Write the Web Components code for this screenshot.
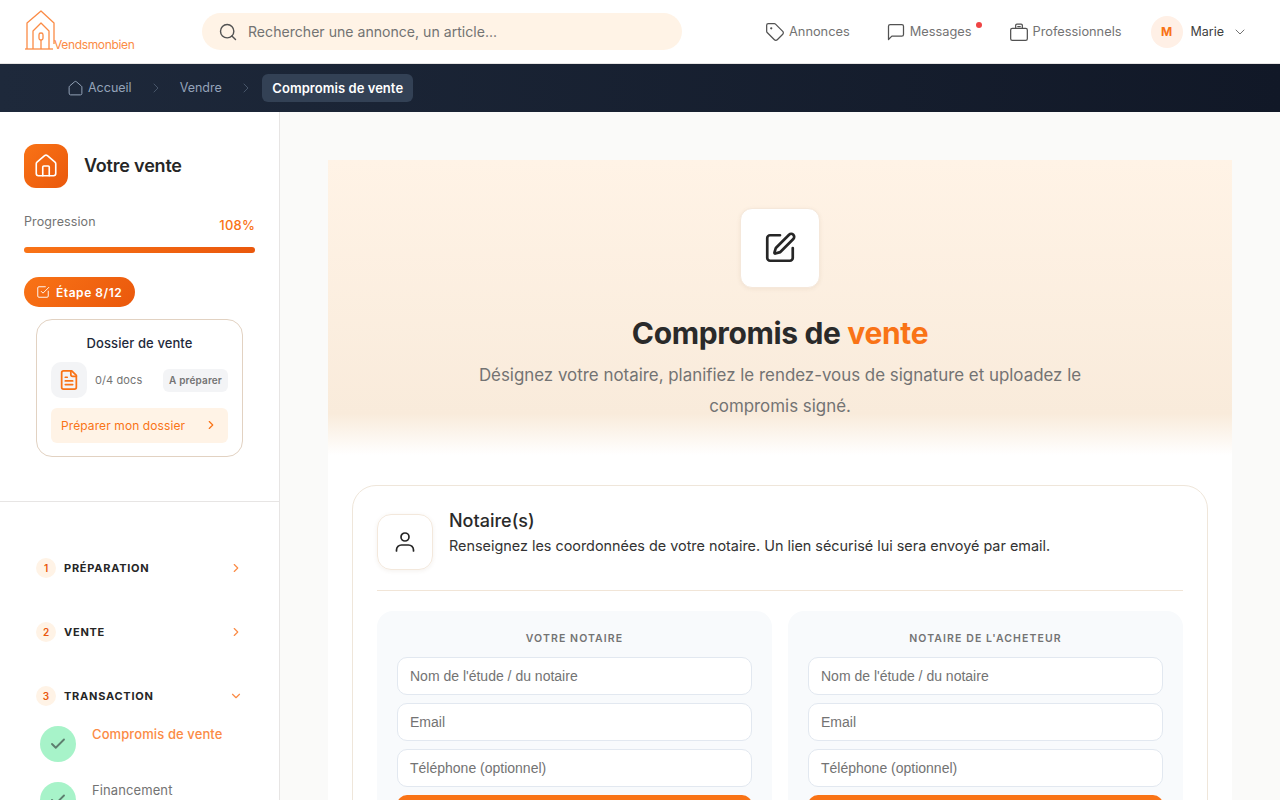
<!DOCTYPE html>
<html lang="fr">
<head>
<meta charset="utf-8">
<title>Compromis de vente</title>
<style>
html,body{margin:0;padding:0;height:800px;overflow:hidden;background:#fff}
body{font-family:Inter,"Liberation Sans",sans-serif;color:#262626}
vm-app{display:block}
</style>
</head>
<body>
<vm-app></vm-app>
<script>
const ico=(p,s=20,sw=1.5,c='currentColor',extra='')=>`<svg width="${s}" height="${s}" viewBox="0 0 24 24" fill="none" stroke="${c}" stroke-width="${sw}" stroke-linecap="round" stroke-linejoin="round" style="display:block;flex:none;${extra}">${p}</svg>`;
const P={
 search:'<circle cx="11" cy="11" r="8"/><path d="m21 21-4.3-4.3"/>',
 tag:'<path d="M12.6 2.6A2 2 0 0 0 11.2 2H4a2 2 0 0 0-2 2v7.2a2 2 0 0 0 .6 1.4l8.700 8.700a2.400 2.400 0 0 0 3.400 0l6.600-6.600a2.400 2.400 0 0 0 0-3.400z"/><circle cx="7.500" cy="7.500" r=".6" fill="currentColor"/>',
 msg:'<path d="M21 15a2 2 0 0 1-2 2H7l-4 4V5a2 2 0 0 1 2-2h14a2 2 0 0 1 2 2z"/>',
 case:'<rect x="2" y="7.500" width="20" height="14.500" rx="2"/><path d="M8 7.500V4a1.500 1.500 0 0 1 1.500-1.500h5A1.500 1.500 0 0 1 16 4v3.500"/><path d="M10.500 5.500h3"/>',
 home:'<path d="M3 10a2 2 0 0 1 .7-1.500l7-6a2 2 0 0 1 2.600 0l7 6A2 2 0 0 1 21 10v9a2 2 0 0 1-2 2H5a2 2 0 0 1-2-2z"/>',
 home2:'<path d="M15 21v-8a1 1 0 0 0-1-1h-4a1 1 0 0 0-1 1v8"/><path d="M3 10a2 2 0 0 1 .7-1.500l7-6a2 2 0 0 1 2.600 0l7 6A2 2 0 0 1 21 10v9a2 2 0 0 1-2 2H5a2 2 0 0 1-2-2z"/>',
 right:'<path d="m9 18 6-6-6-6"/>',
 down:'<path d="m6 9 6 6 6-6"/>',
 checkbox:'<path d="M21 10.500V19a2 2 0 0 1-2 2H5a2 2 0 0 1-2-2V5a2 2 0 0 1 2-2h11"/><path d="m9 11 3 3L22 4"/>',
 file:'<path d="M15 2H6a2 2 0 0 0-2 2v16a2 2 0 0 0 2 2h12a2 2 0 0 0 2-2V7z"/><path d="M14 2v4a2 2 0 0 0 2 2h4"/><path d="M10 9H8"/><path d="M16 13H8"/><path d="M16 17H8"/>',
 edit:'<path d="M12 3H5a2 2 0 0 0-2 2v14a2 2 0 0 0 2 2h14a2 2 0 0 0 2-2v-7"/><path d="M18.400 2.600a2.100 2.100 0 1 1 3 3L12.400 14.600a2 2 0 0 1-.85.5l-2.870.84a.5.5 0 0 1-.62-.62l.84-2.870a2 2 0 0 1 .5-.85z"/>',
 user:'<path d="M3.500 21v-1a5 5 0 0 1 5-5h7a5 5 0 0 1 5 5v1"/><circle cx="12" cy="7" r="4"/>',
 check:'<path d="M20 6 9 17l-5-5"/>'
};
function def(name,html){
 customElements.define(name,class extends HTMLElement{
  constructor(){super();this.attachShadow({mode:'open'}).innerHTML=typeof html==='function'?html(this):html;}
 });
}

def('vm-header',`<style>
:host{display:flex;align-items:center;height:63px;border-bottom:1px solid #e7e5e4;background:#fff;box-sizing:content-box}
.logo{width:110px;margin-left:25px;height:50px;position:relative;flex:none}
.logo svg{position:absolute;left:0;top:3px}
.logo span{position:absolute;left:29px;top:30px;color:#fb8b45;font-size:12px;letter-spacing:-.35px;line-height:15px;white-space:nowrap}
.search{margin-left:67px;width:480px;height:37px;border-radius:19px;background:#fff3e6;display:flex;align-items:center;color:#737373;font-size:14.100px;flex:none}
.search svg{margin-left:16px;margin-right:10px;color:#525252}
nav{display:flex;align-items:center;margin-left:83px}
.a{display:flex;align-items:center;gap:4px;font-size:12.800px;color:#737373;position:relative}
.a svg{color:#525252}
.a span{margin-bottom:1px}
.dot{position:absolute;width:6px;height:6px;border-radius:50%;background:#ef4444;right:-10px;top:0}
.u{display:flex;align-items:center;margin-left:29px}
.av{width:32px;height:32px;border-radius:50%;background:#fff0e6;color:#f97316;font-weight:700;font-size:12px;display:flex;align-items:center;justify-content:center}
.n{font-size:12.500px;color:#404040;margin-left:8px;margin-right:8px}
</style>
<div class="logo">
<svg width="38" height="40" viewBox="0 0 38 40" fill="none" stroke="#fb8b45" stroke-width="1.300" stroke-linejoin="round"><path d="M0 39h28"/><path d="M2 39V13L16 1l13 12v21"/><path d="M8 39V21l8-8 8 8v18"/><rect x="14" y="23" width="4" height="7" rx="1.800"/><path d="M16 30v9"/></svg>
<span>Vendsmonbien</span></div>
<div class="search">${ico(P.search,20,1.7)}<span>Rechercher une annonce, un article...</span></div>
<nav>
<div class="a">${ico(P.tag,20,1.5)}<span>Annonces</span></div>
<div class="a" style="margin-left:36px">${ico(P.msg,20,1.5)}<span>Messages</span><i class="dot"></i></div>
<div class="a" style="margin-left:37px">${ico(P.case,20,1.5)}<span>Professionnels</span></div>
<div class="u"><div class="av">M</div><div class="n">Marie</div>${ico(P.down,16,1.5,'#737373')}</div>
</nav>`);

def('vm-breadcrumb',`<style>
:host{display:flex;align-items:center;height:48px;padding-left:67px;background:linear-gradient(90deg,#1e293b,#111827);font-size:12.500px;color:#94a3b8}
.h{display:flex;align-items:center;gap:4px}
span{margin-bottom:1px}
.s{margin:0 16px;color:#475569}
.cur{background:#334155;color:#fff;font-weight:600;font-size:13px;letter-spacing:.05px;height:28px;padding:0 10px 1px;box-sizing:border-box;border-radius:6px;display:flex;align-items:center}
</style>
<div class="h">${ico(P.home,17,1.4)}<span>Accueil</span></div>
<div class="s">${ico(P.right,16,1.5)}</div><span>Vendre</span>
<div class="s" style="margin-right:8.600px">${ico(P.right,16,1.5)}</div><div class="cur">Compromis de vente</div>`);

def('vm-dossier',`<style>
:host{display:block;margin:12px 0 0 12px;width:207px;height:138px;box-sizing:border-box;border:1px solid #e2d2c2;border-radius:16px;padding:13px 14px;background:#fff}
h3{margin:0;font-size:13px;line-height:20px;font-weight:500;color:#1e293b;text-align:center;letter-spacing:.1px}
.r{display:flex;align-items:center;margin-top:9px}
.i{width:36px;height:36px;border-radius:10px;background:#f3f4f6;display:flex;align-items:center;justify-content:center;color:#f97316}
.c{font-size:11px;color:#737373;margin-left:8px;flex:1;letter-spacing:.1px}
.b{font-size:10px;font-weight:600;background:#f3f4f6;color:#737373;border-radius:6px;padding:0 6px;height:23px;display:flex;align-items:center;letter-spacing:.15px}
.go{margin-top:10px;height:34px;border-radius:6px;background:#fff3e6;color:#f97316;display:flex;align-items:center;justify-content:space-between;padding:0 10px 1px;font-size:12px;letter-spacing:.1px}
</style><h3>Dossier de vente</h3>
<div class="r"><div class="i">${ico(P.file,22,1.9)}</div><span class="c">0/4 docs</span><span class="b">A préparer</span></div>
<div class="go"><span>Préparer mon dossier</span>${ico(P.right,14,2)}</div>`);

def('vm-section',h=>`<style>
:host{display:flex;align-items:center;height:20px;font-size:11px;font-weight:700;color:#262626;letter-spacing:.75px}
.n{width:20px;height:20px;border-radius:50%;background:#fff3e6;color:#ea580c;font-size:10px;font-weight:600;display:flex;align-items:center;justify-content:center;margin-right:8px;letter-spacing:0}
.t{flex:1}
svg{color:#fb8b45}
</style><div class="n">${h.getAttribute('n')}</div><div class="t"><slot></slot></div>${ico(h.hasAttribute('open')?P.down:P.right,14,2)}`);

def('vm-substep',h=>`<style>
:host{display:flex;align-items:flex-start;height:56px;margin-left:4px;font-size:13px;color:#737373;letter-spacing:.1px}
:host([active]){color:#fb8b45;font-weight:500}
.c{width:36px;height:36px;border-radius:50%;background:#a7f3c9;display:flex;align-items:center;justify-content:center;margin-right:16px;color:#5d7f6f;flex:none}
.l{margin-top:-1px;line-height:18px}
</style><div class="c">${ico(P.check,18,2.500)}</div><div class="l"><slot></slot></div>`);

def('vm-sidebar',`<style>
:host{display:block;width:280px;box-sizing:border-box;border-right:1px solid #e7e5e4;background:#fff;flex:none;height:688px;overflow:hidden}
.top{padding:32px 24px 44px;border-bottom:1px solid #e7e5e4;height:390px;box-sizing:border-box}
.ttl{display:flex;align-items:center;gap:16px}
.bx{width:44px;height:44px;border-radius:12px;background:linear-gradient(135deg,#f97316,#ea580c);display:flex;align-items:center;justify-content:center;color:#fff}
h2{margin:0;font-size:18px;font-weight:600;color:#262626;letter-spacing:-.2px;position:relative;top:-1px}
.p{display:flex;justify-content:space-between;align-items:flex-end;margin-top:25px;font-size:12.500px;color:#737373;height:25px}
.p span{position:relative;top:-9px;letter-spacing:.1px}
.p b{font-weight:500;color:#f97316;font-size:13px;position:relative;top:-5px;letter-spacing:.2px}
.bar{margin-top:9px;height:6px;border-radius:3px;background:linear-gradient(90deg,#f97316,#ea580c)}
.pill{display:inline-flex;align-items:center;gap:6px;margin-top:24px;height:30px;padding:0 13px 0 12px;border-radius:15px;background:linear-gradient(135deg,#f97316,#ea580c);color:#fff;font-size:12px;font-weight:600;letter-spacing:.55px;vertical-align:top}
.nav{padding:56px 36px 0 36px;display:flex;flex-direction:column}
vm-section{margin-bottom:44px}
vm-section[open]{margin-bottom:20px}
</style>
<div class="top">
<div class="ttl"><div class="bx">${ico(P.home2,26,1.5)}</div><h2>Votre vente</h2></div>
<div class="p"><span>Progression</span><b>108%</b></div>
<div class="bar"></div>
<div class="pill">${ico(P.checkbox,14,1.6)}Étape 8/12</div>
<vm-dossier></vm-dossier>
</div>
<div class="nav">
<vm-section n="1">PRÉPARATION</vm-section>
<vm-section n="2">VENTE</vm-section>
<vm-section n="3" open>TRANSACTION</vm-section>
<vm-substep active>Compromis de vente</vm-substep>
<vm-substep>Financement</vm-substep>
</div>`);

def('vm-hero',`<style>
:host{display:block;height:295px;box-sizing:border-box;padding-top:48px;text-align:center;background:linear-gradient(180deg,#fff3e6 0,#f9ebdb 86%,#fff 100%)}
.ic{width:78px;height:78px;margin:0 auto;background:#fff;border:1px solid #f5e8db;border-radius:12px;display:flex;align-items:center;justify-content:center;box-shadow:0 1px 4px rgba(120,80,40,.08);color:#262626}
h1{margin:25px 0 0;font-size:30px;line-height:40px;font-weight:700;letter-spacing:-.35px;color:#2a2a2a}
h1 em{font-style:normal;color:#f97316}
p{margin:7px auto 0;width:640px;font-size:16.900px;line-height:31px;color:#737373}
</style>
<div class="ic">${ico(P.edit,34,1.900)}</div>
<h1>Compromis de <em>vente</em></h1>
<p>Désignez votre notaire, planifiez le rendez-vous de signature et uploadez le compromis signé.</p>`);

def('vm-field',`<style>
:host{display:flex;align-items:center;height:38px;box-sizing:border-box;border:1px solid #e2e8f0;border-radius:10px;background:#fff;padding:0 12px;font:14px "Liberation Sans",Arial,sans-serif;color:#737373}
</style><slot></slot>`);

def('vm-panel',`<style>
:host{display:block;flex:1;min-width:0;background:#f8fafc;border-radius:16px;padding:20px;box-sizing:border-box;height:260px}
h4{margin:0 0 11px;padding-top:1px;font-size:10.500px;line-height:14px;font-weight:600;letter-spacing:1.100px;color:#737373;text-align:center}
.f{display:flex;flex-direction:column;gap:8px}
.btn{height:38px;border-radius:10px;background:#f97316}
</style><h4><slot name="t"></slot></h4><div class="f"><slot></slot><div class="btn"></div></div>`);

def('vm-card',`<style>
:host{display:block;margin:30px 24px 0;background:#fff;border:1px solid #efe6da;border-radius:24px;padding:28px 24px 0;height:400px;box-sizing:border-box}
.h{display:flex;gap:16px;padding-bottom:20px;border-bottom:1px solid #f1e5d7;height:77px;box-sizing:border-box}
.ic{width:56px;height:56px;box-sizing:border-box;border:1px solid #f3e8dc;border-radius:14px;display:flex;align-items:center;justify-content:center;box-shadow:0 1px 4px rgba(120,80,40,.08);color:#262626;flex:none}
h3{margin:-5px 0 0;font-size:18px;line-height:24px;font-weight:500;color:#2a2a2a}
p{margin:3px 0 0;font-size:14.400px;line-height:20px;color:#333}
.g{display:flex;gap:16px;margin-top:20px}
</style>
<div class="h"><div class="ic">${ico(P.user,24,1.700)}</div><div><h3>Notaire(s)</h3><p>Renseignez les coordonnées de votre notaire. Un lien sécurisé lui sera envoyé par email.</p></div></div>
<div class="g"><slot></slot></div>`);

def('vm-app',`<style>
:host{display:block;height:800px;overflow:hidden}
.b{display:flex;height:688px}
main{flex:1;background:#fafaf9;padding:48px 48px 0;min-width:0;overflow:hidden}
.w{background:#fff;height:640px;overflow:hidden}
</style>
<vm-header></vm-header><vm-breadcrumb></vm-breadcrumb>
<div class="b"><vm-sidebar></vm-sidebar><main><div class="w"><vm-hero></vm-hero>
<vm-card>
<vm-panel><span slot="t">VOTRE NOTAIRE</span><vm-field>Nom de l'étude / du notaire</vm-field><vm-field>Email</vm-field><vm-field>Téléphone (optionnel)</vm-field></vm-panel>
<vm-panel><span slot="t">NOTAIRE DE L'ACHETEUR</span><vm-field>Nom de l'étude / du notaire</vm-field><vm-field>Email</vm-field><vm-field>Téléphone (optionnel)</vm-field></vm-panel>
</vm-card></div></main></div>`);
</script>
</body>
</html>
